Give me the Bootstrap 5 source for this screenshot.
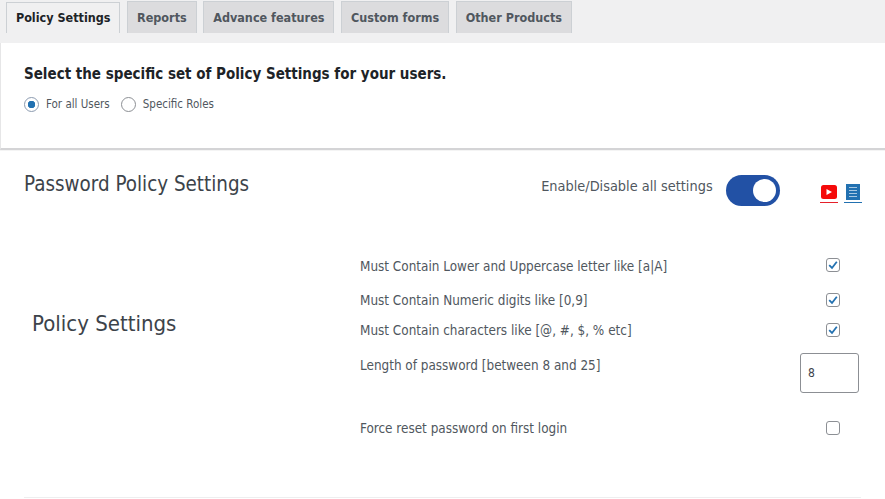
<!DOCTYPE html>
<html lang="en">
<head>
<meta charset="utf-8">
<title>Policy Settings</title>
<link href="https://cdn.jsdelivr.net/npm/bootstrap@5.3.0/dist/css/bootstrap.min.css" rel="stylesheet">
<style>
html,body{height:499px;overflow:hidden}
body{background:#f0f0f1;font-family:"DejaVu Sans Condensed","DejaVu Sans",sans-serif;font-stretch:condensed;color:#3c434a;width:885px}
.tabbar{height:43px;padding:1px 0 0 6px;gap:6.7px}
.tabitem{height:32px;padding:0 8.9px;background:#dcdcde;border:1px solid #ccd0d4;border-bottom:0;color:#50575e;font-size:12.5px;font-weight:700;line-height:31px;text-decoration:none}
.tabitem.on{background:#f0f0f1;color:#1d2327;height:31px;margin-top:1px;line-height:29px}
.scope{height:107px;background:#fff;border-bottom:2px solid #d4d4d6;border-left:1px solid #e6e6e7;padding:21px 23px 0}
.scope-title{font-size:15px;font-weight:700;color:#1d2327;margin:0 0 11px;line-height:20px}
.scope-opt{font-size:11.5px;gap:7px;margin-right:11px;color:#50575e;line-height:18px}
.radio-dot{width:15px;height:15px;border:1px solid #8c8f94;border-radius:50%;background:#fff;flex:none}
.radio-dot.sel{border-color:#8c9bb0;background:radial-gradient(circle,#2271b1 0 3.5px,#fff 4px)}
.policy{height:349px;background:#fff;padding:0 24px;border-top:1px solid #f4f4f4}
.policy-head{height:73px}
.policy-name{font-size:20.4px;font-weight:400;color:#3c434a;margin:0;line-height:28px;padding-top:19px}
.master{padding-top:24px;color:#50575e;line-height:20px}
.master-label{width:185px;margin-left:292px;padding-top:1px;font-size:14.4px}
.toggle-pill{display:block;width:54px;height:31px;border-radius:16px;background:#2251a5;position:relative}
.toggle-pill::after{content:"";position:absolute;right:4px;top:4px;width:23px;height:23px;border-radius:50%;background:#fff}
.doc-links{gap:6px;margin-left:40px;padding-top:7px}
.doc-link{display:block;width:18px;height:21px;border-bottom:1px solid}
.side-name{width:336px;font-size:22px;line-height:30px;padding:85px 0 0 8px;color:#3c434a}
.rules{width:501px;font-size:13.4px;color:#50575e;padding-top:34px}
.rule-row{display:flex;justify-content:space-between;align-items:flex-start;line-height:18px}
.tick{width:14px;height:14px;border:1px solid #8c8f94;border-radius:3px;background:#fff;margin:1px 21px 0 0;flex:none}
.tick.first{margin-top:0}
.num-box{width:59px;height:40px;border:1px solid #8c8f94;border-radius:3px;font-size:12px;color:#3c434a;padding:0 7px;line-height:38px;background:#fff;margin-right:2px}
.foot-line{height:1px;background:#eeeeef;margin-top:59px}
</style>
</head>
<body>
<nav class="d-flex tabbar">
<a class="tabitem on" href="#">Policy Settings</a>
<a class="tabitem" href="#">Reports</a>
<a class="tabitem" href="#">Advance features</a>
<a class="tabitem" href="#">Custom forms</a>
<a class="tabitem" href="#">Other Products</a>
</nav>
<section class="scope">
<h2 class="scope-title">Select the specific set of Policy Settings for your users.</h2>
<div class="d-flex">
<div class="d-flex align-items-center scope-opt"><span class="radio-dot sel"></span>For all Users</div>
<div class="d-flex align-items-center scope-opt"><span class="radio-dot"></span>Specific Roles</div>
</div>
</section>
<section class="policy">
<div class="d-flex policy-head">
<h3 class="policy-name flex-shrink-0">Password Policy Settings</h3>
<div class="d-flex master">
<div class="master-label flex-shrink-0">Enable/Disable all settings</div>
<span class="toggle-pill"></span>
<div class="d-flex doc-links">
<a class="doc-link" href="#" style="color:#e5202a" aria-label="Video">
<svg width="18" height="16" viewBox="0 0 18 16"><rect x="1" y="0" width="16" height="14" rx="2.5" fill="#f50a0a"/><path d="M6.5 4v6l5.5-3z" fill="#fff"/></svg></a>
<a class="doc-link" href="#" style="color:#2271b1" aria-label="Guide">
<svg width="18" height="17" viewBox="0 0 18 17"><rect x="2" y="0" width="14" height="16" fill="#2271b1"/><path d="M5 3.5h8M5 6.5h8M5 9.5h8M5 12.5h8" stroke="#a9c8e2" stroke-width="1.2"/></svg></a>
</div>
</div>
</div>
<div class="d-flex">
<div class="side-name flex-shrink-0">Policy Settings</div>
<div class="rules">
<div class="rule-row" style="height:34px"><span>Must Contain Lower and Uppercase letter like [a|A]</span><span class="tick first"><svg width="12" height="12" viewBox="0 0 12 12" class="d-block"><path d="M2.2 6.2 5 9l4.8-6.2" fill="none" stroke="#2271b1" stroke-width="1.8"/></svg></span></div>
<div class="rule-row" style="height:30px"><span>Must Contain Numeric digits like [0,9]</span><span class="tick"><svg width="12" height="12" viewBox="0 0 12 12" class="d-block"><path d="M2.2 6.2 5 9l4.8-6.2" fill="none" stroke="#2271b1" stroke-width="1.8"/></svg></span></div>
<div class="rule-row" style="height:31px"><span>Must Contain characters like [@, #, $, % etc]</span><span class="tick"><svg width="12" height="12" viewBox="0 0 12 12" class="d-block"><path d="M2.2 6.2 5 9l4.8-6.2" fill="none" stroke="#2271b1" stroke-width="1.8"/></svg></span></div>
<div class="rule-row" style="height:67px"><span class="pt-1">Length of password [between 8 and 25]</span><span class="num-box">8</span></div>
<div class="rule-row"><span>Force reset password on first login</span><span class="tick"></span></div>
</div>
</div>
<div class="foot-line"></div>
</section>
<script src="https://cdn.jsdelivr.net/npm/bootstrap@5.3.0/dist/js/bootstrap.bundle.min.js"></script>
</body>
</html>
